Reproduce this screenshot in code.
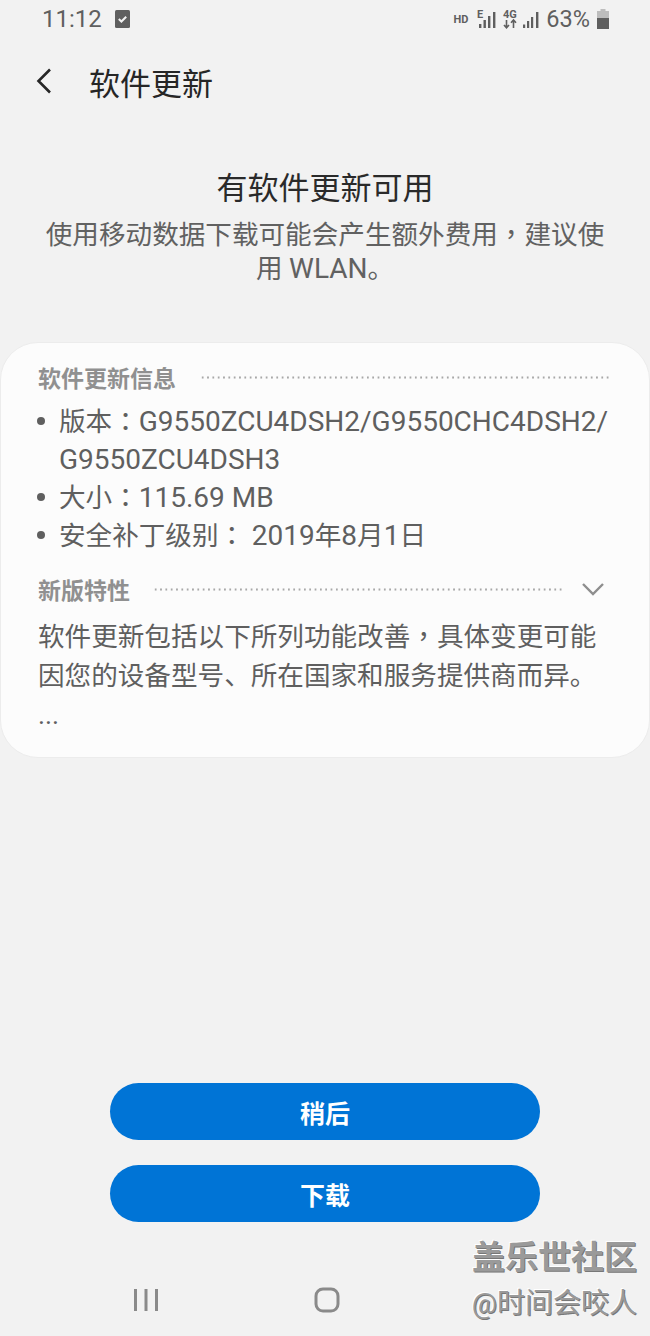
<script lang="ts">
  const build = ['G9550ZCU4DSH2/G9550CHC4DSH2/', 'G9550ZCU4DSH3'];
</script>

<div class="screen">
  <header class="status">
    <div class="status-left">
      <span class="clock">11:12</span>
      <svg width="15" height="18" viewBox="0 0 15 18">
        <rect width="15" height="18" rx="1.500" fill="#5f5f5f" />
        <path d="M3.800 9l2.600 2.500 4.800-4.800" fill="none" stroke="#f2f2f2" stroke-width="2" />
      </svg>
    </div>
    <div class="status-right">
      <span class="hd">HD</span>
      <svg width="20" height="20" viewBox="0 0 20 20" fill="#5f5f5f">
        <text x="0" y="8.500" class="net">E</text>
        <rect x="2" y="15" width="2.400" height="4" />
        <rect x="6.500" y="11" width="2.400" height="8" />
        <rect x="11" y="7" width="2.400" height="12" />
        <rect x="16" y="3" width="2.400" height="16" />
      </svg>
      <svg width="37" height="20" viewBox="0 0 37 20" fill="#5f5f5f">
        <text x="0" y="8.500" class="net">4G</text>
        <path d="M3.500 11v8M1 16l2.500 2.800 2.500-2.800M10.500 19v-8M8 13.800l2.500-2.800 2.500 2.800" fill="none" stroke="#5f5f5f" stroke-width="1.600" />
        <rect x="20" y="15.500" width="2.200" height="3.500" />
        <rect x="24" y="12" width="2.200" height="7" />
        <rect x="28" y="8" width="2.200" height="11" />
        <rect x="33" y="3" width="2.400" height="16" />
      </svg>
      <span class="pct">63%</span>
      <svg width="12" height="20" viewBox="0 0 12 20">
        <path d="M3.500 0h5v2h3.500v18h-12v-18h3.500z" fill="#bdbdbd" />
        <rect y="9" width="12" height="11" fill="#5f5f5f" />
      </svg>
    </div>
  </header>

  <nav class="title-bar">
    <svg width="18" height="28" viewBox="0 0 18 28">
      <path d="M15 2.500L3.500 14 15 25.500" fill="none" stroke="#262626" stroke-width="2.600" />
    </svg>
    <h1>软件更新</h1>
  </nav>

  <section class="intro">
    <h2>有软件更新可用</h2>
    <p>使用移动数据下载可能会产生额外费用<span class="punct">，</span>建议使用 <span class="latin">WLAN</span>。</p>
  </section>

  <section class="card">
    <div class="section-head">
      <span>软件更新信息</span>
      <i class="dots"></i>
    </div>
    <ul>
      <li>版本<span class="punct">：</span><span class="latin">{build[0]} {build[1]}</span></li>
      <li>大小<span class="punct">：</span><span class="latin">115.69 MB</span></li>
      <li>安全补丁级别<span class="punct">：</span> <span class="latin">2019</span>年<span class="latin">8</span>月<span class="latin">1</span>日</li>
    </ul>
    <div class="section-head features">
      <span>新版特性</span>
      <i class="dots"></i>
      <svg width="24" height="14" viewBox="0 0 24 14">
        <path d="M2 2l10 10L22 2" fill="none" stroke="#8e8e8e" stroke-width="2.400" />
      </svg>
    </div>
    <div class="notes">
      <p>软件更新包括以下所列功能改善<span class="punct">，</span>具体变更可能因您的设备型号、所在国家和服务提供商而异。</p>
      <p>...</p>
    </div>
  </section>

  <div class="actions">
    <button>稍后</button>
    <button>下载</button>
  </div>

  <footer class="softkeys">
    <svg width="26" height="24" viewBox="0 0 26 24" fill="#8a8a8a">
      <rect x="1" y="1" width="3" height="22" />
      <rect x="11.500" y="1" width="3" height="22" />
      <rect x="22" y="1" width="3" height="22" />
    </svg>
    <svg width="26" height="26" viewBox="0 0 26 26">
      <rect x="2" y="2" width="22" height="22" rx="7" fill="none" stroke="#8a8a8a" stroke-width="3" />
    </svg>
  </footer>

  <div class="watermark">
    <strong>盖乐世社区</strong>
    <span>@时间会咬人</span>
  </div>
</div>

<style>
  :global(body) {
    margin: 0;
    background: #f2f2f2;
  }

  .screen {
    position: relative;
    width: 650px;
    height: 1336px;
    overflow: hidden;
    background: #f2f2f2;
    color: #5c5c5c;
    font-family: Roboto, "Noto Sans CJK SC", sans-serif;
  }

  .status {
    height: 38px;
    display: flex;
    align-items: center;
    justify-content: space-between;
    padding: 0 41px 0 42px;
    color: #5f5f5f;
  }

  .status svg {
    overflow: visible;
  }

  .status-left {
    display: flex;
    align-items: center;
    gap: 13px;
  }

  .clock {
    font-size: 24px;
  }

  .status-right {
    display: flex;
    align-items: center;
    gap: 6px;
  }

  .hd {
    font-size: 11px;
    font-weight: 700;
    margin-right: 3px;
  }

  .net {
    font-family: Roboto, sans-serif;
    font-size: 11px;
    font-weight: 700;
  }

  .pct {
    font-size: 23.500px;
    margin-right: 1px;
  }

  .title-bar {
    display: flex;
    align-items: center;
    gap: 36px;
    height: 50px;
    margin-top: 18px;
    padding-left: 35px;
    color: #262626;
  }

  h1 {
    margin: 0;
    font-size: 31px;
    font-weight: 400;
  }

  .intro {
    margin-top: 61px;
    padding: 0 40px;
    text-align: center;
  }

  h2 {
    margin: 0;
    height: 44px;
    line-height: 44px;
    font-size: 31px;
    font-weight: 400;
    color: #2a2a2a;
  }

  .intro p {
    margin: 7px 0 0;
    font-size: 26.600px;
    line-height: 34px;
    color: #616161;
  }

  /* mixed-font runs must not stretch the line box */
  .punct {
    font-family: "Noto Sans CJK TC", sans-serif;
    line-height: 1;
  }

  .latin {
    font-size: 28px;
    line-height: 1;
  }

  .card {
    box-sizing: border-box;
    height: 416px;
    margin-top: 56px;
    padding: 16px 39px 0 37px;
    background: #fcfcfc;
    border: 1px solid #ececec;
    border-radius: 38px;
  }

  .section-head {
    display: flex;
    align-items: center;
    gap: 24px;
    height: 36px;
    font-size: 23px;
    font-weight: 700;
    color: #909090;
  }

  .dots {
    flex: 1;
    height: 3px;
    background-image: radial-gradient(circle, #a8a8a8 1px, transparent 1.200px);
    background-size: 5.330px 3px;
  }

  .features {
    gap: 16px;
    margin-top: 16px;
  }

  .features span {
    margin-right: 7px;
  }

  .features svg {
    margin-right: 5px;
  }

  ul {
    list-style: none;
    margin: 8px 0 0;
    padding: 0;
  }

  li {
    position: relative;
    padding-left: 21px;
    font-size: 26.600px;
    line-height: 38px;
    color: #5f5f5f;
  }

  li::before {
    content: "";
    position: absolute;
    left: -1px;
    top: 14px;
    width: 8px;
    height: 8px;
    border-radius: 50%;
    background: #5f5f5f;
  }

  .notes {
    margin-top: 10px;
    width: 570px;
    font-size: 26.600px;
    line-height: 39px;
    color: #5f5f5f;
  }

  .notes p {
    margin: 0;
  }

  .actions {
    position: absolute;
    left: 110px;
    right: 110px;
    top: 1083px;
    display: flex;
    flex-direction: column;
    gap: 25px;
  }

  button {
    height: 57px;
    border: 0;
    border-radius: 29px;
    background: #0074d6;
    color: #fff;
    font-family: inherit;
    font-size: 25px;
    font-weight: 700;
  }

  .softkeys {
    position: absolute;
    left: 133px;
    bottom: 23px;
    display: flex;
    align-items: center;
    gap: 155px;
  }

  .watermark {
    position: absolute;
    right: 13px;
    top: 1238px;
    display: flex;
    flex-direction: column;
    align-items: flex-end;
    gap: 9px;
    color: #9a9a9a;
    text-shadow: 1px 1px 0 #777, -1px -1px 0 #fff;
  }

  .watermark strong {
    font-size: 33px;
    line-height: 40px;
    font-weight: 700;
  }

  .watermark span {
    font-size: 28px;
    line-height: 34px;
  }
</style>
